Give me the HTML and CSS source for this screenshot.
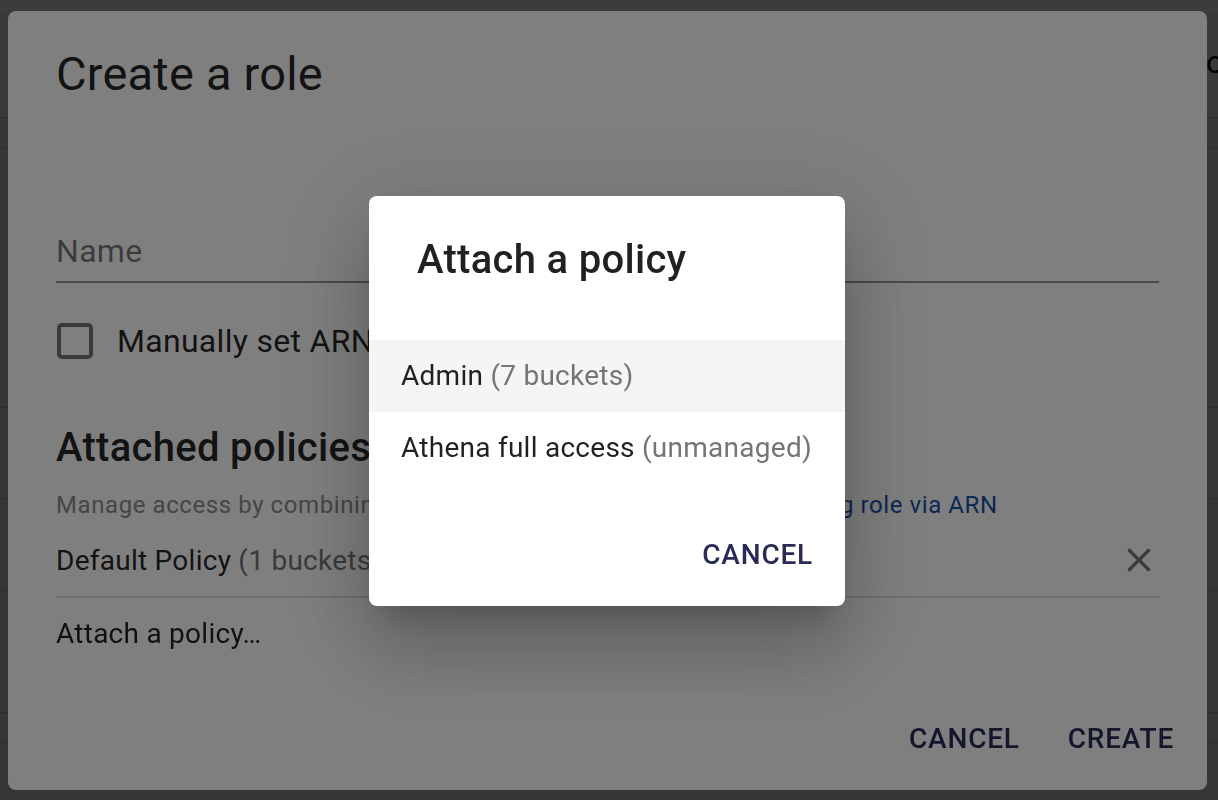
FILE: index.html
```html
<!DOCTYPE html>
<html lang="en">
<head>
<meta charset="utf-8">
<title>Create a role</title>
<link rel="stylesheet" href="styles.css">
</head>
<body>
<div class="page">
  <div class="page-topbar"></div>
  <div class="page-header"><span class="page-header-title">Policies</span></div>
  <div class="page-row row-a"></div>
  <div class="page-row row-b"></div>
  <div class="page-row row-c"></div>
  <div class="page-row row-d"></div>
  <div class="page-row row-e"></div>
  <div class="page-row row-f"></div>
  <div class="page-row row-g"></div>
</div>

<div class="overlay overlay-role">
  <div class="dialog dialog-role">
    <h2 class="role-title">Create a role</h2>
    <div class="role-content">
      <div class="field"><span class="field-label">Name</span></div>
      <div class="check-row"><span class="checkbox"></span><span class="check-label">Manually set ARN</span></div>
      <h3 class="section-title">Attached policies</h3>
      <p class="helper">Manage access by combining multiple policies, or <span class="link">attaching an existing role via ARN</span></p>
      <div class="policy-row">
        <span class="policy-name">Default Policy <span class="muted">(1 buckets)</span></span>
        <svg class="close-icon" viewBox="0 0 24 24" width="40" height="40" aria-hidden="true"><path d="M19 6.41L17.59 5 12 10.590 6.41 5 5 6.41 10.59 12 5 17.59 6.41 19 12 13.41 17.59 19 19 17.59 13.41 12z"/></svg>
      </div>
      <div class="attach-row">Attach a policy…</div>
    </div>
    <div class="role-actions">
      <button class="text-button">Cancel</button>
      <button class="text-button">Create</button>
    </div>
  </div>
</div>

<div class="overlay overlay-attach">
  <div class="dialog dialog-attach">
    <h2 class="attach-title">Attach a policy</h2>
    <ul class="policy-list">
      <li class="policy-item is-hover">Admin <span class="muted">(7 buckets)</span></li>
      <li class="policy-item">Athena full access <span class="muted">(unmanaged)</span></li>
    </ul>
    <div class="attach-actions">
      <button class="text-button">Cancel</button>
    </div>
  </div>
</div>
</body>
</html>
```

FILE: styles.css
```css
html, body {
  margin: 0;
  padding: 0;
}

body {
  width: 1218px;
  height: 800px;
  overflow: hidden;
  font-family: Roboto, "Noto Sans", "Liberation Sans", sans-serif;
  background: #d4d4d4;
  color: rgba(0, 0, 0, 0.87);
}

/* background page */
.page {
  display: flex;
  flex-direction: column;
  height: 800px;
}

.page-topbar {
  height: 11px;
  background: #f0f0f0;
}

.page-header {
  background: #e6e6e6;
  border-bottom: 1px solid #b4b4b4;
  padding-left: 1186px;
  padding-top: 6px;
  box-sizing: border-box;
  height: 107px;
  font-size: 32px;
  line-height: 90px;
  white-space: nowrap;
  overflow: hidden;
  color: #000;
}

.page-row {
  border-bottom: 1px solid #b8b8b8;
  background: #d8d8d8;
}

.row-a { height: 30px; background: #dcdcdc; }
.row-b { height: 258px; }
.row-c { height: 90px; }
.row-d { height: 91px; }
.row-e { height: 121px; }
.row-f { height: 29px; }
.row-g { flex: 1; border-bottom: 0; }

/* overlays */
.overlay {
  position: fixed;
  inset: 0;
  background: rgba(0, 0, 0, 0.5);
  display: flex;
  box-sizing: border-box;
}

.overlay-role {
  align-items: flex-start;
  padding: 11px 11px 10px 8px;
}

.overlay-attach {
  align-items: center;
  justify-content: center;
  padding: 2px 4px 0 0;
}

.dialog {
  background: #fff;
  border-radius: 8px;
  box-sizing: border-box;
}

/* Create a role dialog */
.dialog-role {
  width: 1199px;
  height: 779px;
  display: flex;
  flex-direction: column;
}

.role-title {
  margin: 0;
  padding: 32px 48px 0;
  font-size: 47px;
  font-weight: 400;
  line-height: 62px;
  letter-spacing: 0.2px;
  color: rgba(0, 0, 0, 0.87);
}

.role-content {
  flex: 1;
  padding: 0 48px;
  display: flex;
  flex-direction: column;
}

.field {
  padding-top: 118px;
  padding-bottom: 2px;
  border-bottom: 2px solid rgba(0, 0, 0, 0.42);
}

.field-label {
  display: block;
  font-size: 32px;
  line-height: 56px;
  letter-spacing: 0.3px;
  color: rgba(0, 0, 0, 0.54);
}

.check-row {
  margin-top: 22px;
  height: 72px;
  display: flex;
  align-items: center;
  gap: 24px;
  padding-left: 1px;
}

.checkbox {
  width: 36px;
  height: 36px;
  box-sizing: border-box;
  border: 4px solid rgba(0, 0, 0, 0.54);
  border-radius: 5px;
}

.check-label {
  font-size: 32px;
  letter-spacing: 0.3px;
}

.section-title {
  margin: 47px 0 0;
  font-size: 40px;
  font-weight: 500;
  line-height: 48px;
  letter-spacing: 0.3px;
}

.helper {
  margin: 17px 0 0;
  font-size: 24px;
  line-height: 32px;
  letter-spacing: 0.58px;
  color: #8c8c8c;
  white-space: nowrap;
}

.link {
  color: #1b4ea8;
}

.policy-row {
  margin-top: 3px;
  height: 72px;
  display: flex;
  align-items: center;
  justify-content: space-between;
  border-bottom: 2px solid #e0e0e0;
  font-size: 28px;
  letter-spacing: 0.26px;
}

.close-icon {
  fill: rgba(0, 0, 0, 0.54);
  display: block;
}

.muted {
  color: #757575;
}

.attach-row {
  height: 72px;
  line-height: 72px;
  font-size: 28px;
  letter-spacing: 0.26px;
}

.role-actions {
  display: flex;
  justify-content: flex-end;
  gap: 16px;
  padding: 16px 17px 16px;
}

.text-button {
  height: 72px;
  padding: 0 16px;
  border: 0;
  background: none;
  font-family: Roboto, "Noto Sans", "Liberation Sans", sans-serif;
  font-size: 28px;
  font-weight: 500;
  letter-spacing: 0.8px;
  text-transform: uppercase;
  color: #282c56;
  border-radius: 8px;
}

/* Attach a policy dialog */
.dialog-attach {
  width: 476px;
  box-shadow:
    0 22px 30px -14px rgba(0, 0, 0, 0.2),
    0 48px 76px 6px rgba(0, 0, 0, 0.14),
    0 18px 92px 16px rgba(0, 0, 0, 0.12);
}

.attach-title {
  margin: 0;
  padding: 32px 48px 0;
  font-size: 40px;
  font-weight: 500;
  line-height: 64px;
  letter-spacing: 0.3px;
}

.policy-list {
  list-style: none;
  margin: 48px 0 0;
  padding: 0;
}

.policy-item {
  height: 72px;
  line-height: 72px;
  padding: 0 32px;
  font-size: 28px;
  letter-spacing: 0.26px;
  white-space: nowrap;
}

.policy-item.is-hover {
  background: #f5f5f5;
}

.attach-actions {
  display: flex;
  justify-content: flex-end;
  padding: 34px 16px 16px;
}
```
